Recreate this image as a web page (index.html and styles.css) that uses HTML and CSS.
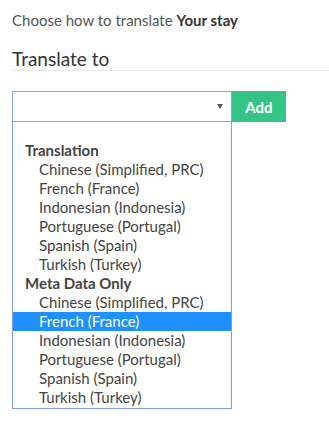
FILE: index.html
```html
<!DOCTYPE html>
<html>
<head>
<meta charset="utf-8">
<link rel="stylesheet" href="styles.css">
</head>
<body>
<div class="page">
  <p class="intro">Choose how to translate <b>Your stay</b></p>
  <h2 class="title">Translate to</h2>
  <div class="picker">
    <div class="row">
      <div class="select"><span class="arrow"></span></div>
      <button class="add">Add</button>
    </div>
    <div class="list">
      <div class="group">Translation</div>
      <div class="opt">Chinese (Simplified, PRC)</div>
      <div class="opt">French (France)</div>
      <div class="opt">Indonesian (Indonesia)</div>
      <div class="opt">Portuguese (Portugal)</div>
      <div class="opt">Spanish (Spain)</div>
      <div class="opt">Turkish (Turkey)</div>
      <div class="group">Meta Data Only</div>
      <div class="opt">Chinese (Simplified, PRC)</div>
      <div class="opt selected">French (France)</div>
      <div class="opt">Indonesian (Indonesia)</div>
      <div class="opt">Portuguese (Portugal)</div>
      <div class="opt">Spanish (Spain)</div>
      <div class="opt">Turkish (Turkey)</div>
    </div>
  </div>
</div>
</body>
</html>
```
FILE: styles.css
```css
html, body {
  margin: 0;
  padding: 0;
  background: #fff;
}
.page {
  padding: 11px 0 0 12px;
  font-family: Lato, "Open Sans", sans-serif;
  color: #444;
}
.intro {
  margin: 0;
  font-size: 15px;
  line-height: 18px;
  color: #555;
}
.intro b {
  color: #333;
  font-weight: 700;
}
.title {
  margin: 18px 0 0 0;
  font-size: 19px;
  font-weight: 400;
  line-height: 23px;
  color: #333;
  padding-bottom: 0;
  border-bottom: 1px solid #e8e8e8;
}
.picker {
  margin-top: 20px;
  width: 274px;
}
.row {
  display: flex;
  height: 31px;
}
.select {
  width: 218px;
  height: 29px;
  border: 1px solid #7ea6e0;
  position: relative;
  background: #fff;
}
.arrow {
  position: absolute;
  right: 8px;
  top: 12px;
  width: 0;
  height: 0;
  border-left: 3px solid transparent;
  border-right: 3px solid transparent;
  border-top: 5px solid #555;
}
.add {
  width: 54px;
  height: 31px;
  margin: 0;
  border: none;
  background: #36c486;
  color: #fff;
  font-family: Lato, sans-serif;
  font-weight: 700;
  font-size: 15px;
  padding: 0;
}
.list {
  width: 218px;
  border: 1px solid #7b9dd8;
  border-top: none;
  padding: 19px 0 1px 0;
  font-size: 15px;
}
.group, .opt {
  height: 19px;
  line-height: 19px;
  white-space: nowrap;
}
.group {
  font-weight: 700;
  padding-left: 12px;
  color: #444;
}
.opt {
  padding-left: 26px;
  color: #444;
}
.opt.selected {
  background: #1e90ff;
  color: #fff;
}
```
